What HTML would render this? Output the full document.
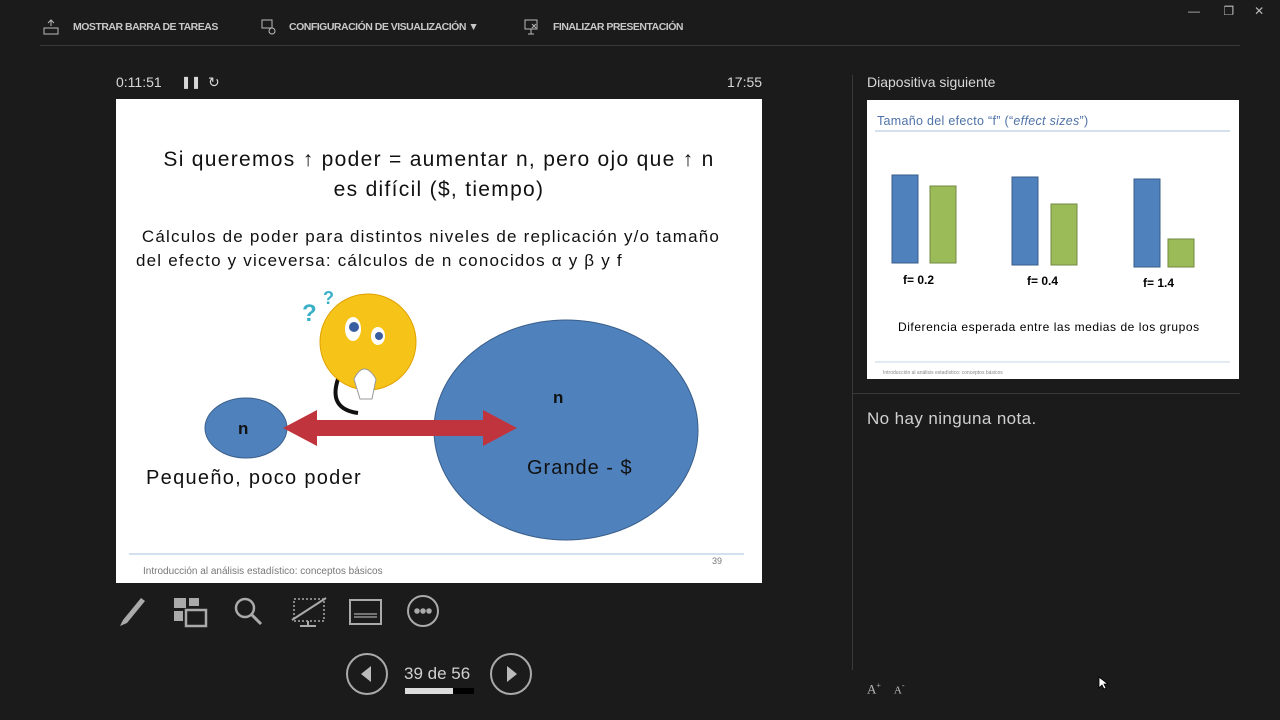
<!DOCTYPE html>
<html><head><meta charset="utf-8"><style>
body{margin:0;width:1280px;height:720px;background:#1b1b1b;font-family:"Liberation Sans",sans-serif;color:#d8d8d8;position:relative;overflow:hidden}
.a{position:absolute;white-space:nowrap}
.tb{font-size:10.5px;font-weight:bold;color:#c8c8c8;top:21px;letter-spacing:-0.5px}
.slide{position:absolute;left:116px;top:99px;width:646px;height:484px;background:#fff;color:#111}
.prev{position:absolute;left:867px;top:100px;width:372px;height:279px;background:#fff;color:#111}
</style></head><body>
<div class="a tb" style="left:73px">MOSTRAR BARRA DE TAREAS</div>
<div class="a tb" style="left:289px">CONFIGURACIÓN DE VISUALIZACIÓN ▼</div>
<div class="a tb" style="left:553px">FINALIZAR PRESENTACIÓN</div>
<svg class="a" style="left:42px;top:18px" width="18" height="18"><path d="M9 2v6M6 5l3-3 3 3M2 10h14v6H2z" stroke="#bbb" fill="none"/></svg>
<svg class="a" style="left:260px;top:18px" width="18" height="18"><rect x="2" y="2" width="10" height="8" stroke="#bbb" fill="none"/><circle cx="12" cy="13" r="3" stroke="#bbb" fill="none"/></svg>
<svg class="a" style="left:523px;top:18px" width="18" height="18"><rect x="2" y="2" width="12" height="9" stroke="#bbb" fill="none"/><path d="M8 11v5M5 16h6M9 6l4 4M13 6l-4 4" stroke="#bbb"/></svg>
<div class="a" style="left:1188px;top:4px;color:#bbb;font-size:12px">&#8212;&nbsp;&nbsp;&nbsp;&nbsp;&nbsp;&nbsp;&nbsp;❐&nbsp;&nbsp;&nbsp;&nbsp;&nbsp;&nbsp;✕</div>
<div class="a" style="left:40px;top:45px;width:1200px;height:1px;background:#3a3a3a"></div>
<div class="a" style="left:116px;top:74px;font-size:14px">0:11:51</div>
<div class="a" style="left:181px;top:75px;font-size:12px">❚❚</div>
<div class="a" style="left:208px;top:74px;font-size:14px">↻</div>
<div class="a" style="left:727px;top:74px;font-size:14px">17:55</div>
<div class="a" style="left:852px;top:75px;width:1px;height:595px;background:#3a3a3a"></div>
<div class="a" style="left:867px;top:74px;font-size:14px">Diapositiva siguiente</div>
<div class="slide">
<div class="a" style="left:0;width:646px;text-align:center;top:46px;font-size:21px;line-height:30px;letter-spacing:1.3px">Si queremos ↑ poder = aumentar n, pero ojo que ↑ n<br>es difícil ($, tiempo)</div>
<div class="a" style="left:20px;top:126px;font-size:17px;line-height:24px;letter-spacing:1.2px">&nbsp;Cálculos de poder para distintos niveles de replicación y/o tamaño<br>del efecto y viceversa: cálculos de n conocidos α y β y f</div>
<svg class="a" style="left:0;top:0" width="646" height="484">
<ellipse cx="450" cy="331" rx="132" ry="110" fill="#4f81bd" stroke="#3a5f8a"/>
<ellipse cx="130" cy="329" rx="41" ry="30" fill="#4f81bd" stroke="#3a5f8a"/>
<path d="M167 329l34-18v10h166v-10l34 18-34 18v-10h-166v10z" fill="#c0343d"/>
<path d="M222 280q-10 30 20 34" stroke="#111" stroke-width="4" fill="none"/>
<circle cx="252" cy="243" r="48" fill="#f6c419" stroke="#e0a000"/>
<ellipse cx="237" cy="230" rx="8" ry="12" fill="#fff"/><circle cx="238" cy="228" r="5" fill="#3a5fa0"/>
<ellipse cx="262" cy="237" rx="7" ry="9" fill="#fff"/><circle cx="263" cy="237" r="4" fill="#3a5fa0"/>
<path d="M238 280q10-20 22 0l-4 20h-12z" fill="#fff" stroke="#999"/>
<text x="186" y="222" fill="#3bb0c8" font-size="24" font-weight="bold">?</text><text x="207" y="205" fill="#3bb0c8" font-size="18" font-weight="bold">?</text>
<text x="122" y="335" font-size="17" font-weight="bold" fill="#111">n</text>
<text x="437" y="304" font-size="17" font-weight="bold" fill="#111">n</text>
<text x="411" y="375" font-size="20" fill="#111" letter-spacing="1" font-family="Liberation Sans">Grande - $</text>
<text x="30" y="385" font-size="20" fill="#111" letter-spacing="1.3" font-family="Liberation Sans">Pequeño, poco poder</text>
<line x1="13" y1="455" x2="628" y2="455" stroke="#a7c0de"/>
<text x="27" y="475" font-size="10" fill="#777">Introducción al análisis estadístico: conceptos básicos</text>
<text x="596" y="465" font-size="9" fill="#777">39</text>
</svg></div>
<div class="prev"><svg width="372" height="279">
<text x="10" y="25" font-size="12.5" fill="#4f73a8" letter-spacing="0.3">Tamaño del efecto “f” (“<tspan font-style="italic">effect sizes</tspan>”)</text>
<line x1="8" y1="31" x2="363" y2="31" stroke="#c5d5e8" stroke-width="1.5"/>
<rect x="25" y="75" width="26" height="88" fill="#4f81bd" stroke="#385d8a"/>
<rect x="63" y="86" width="26" height="77" fill="#9bbb59" stroke="#71893f"/>
<rect x="145" y="77" width="26" height="88" fill="#4f81bd" stroke="#385d8a"/>
<rect x="184" y="104" width="26" height="61" fill="#9bbb59" stroke="#71893f"/>
<rect x="267" y="79" width="26" height="88" fill="#4f81bd" stroke="#385d8a"/>
<rect x="301" y="139" width="26" height="28" fill="#9bbb59" stroke="#71893f"/>
<text x="36" y="184" font-size="12" font-weight="bold">f= 0.2</text>
<text x="160" y="185" font-size="12" font-weight="bold">f= 0.4</text>
<text x="276" y="187" font-size="12" font-weight="bold">f= 1.4</text>
<text x="31" y="231" font-size="12" letter-spacing="0.55">Diferencia esperada  entre las medias de los grupos</text>
<line x1="8" y1="262" x2="363" y2="262" stroke="#c5d5e8"/>
<text x="16" y="274" font-size="5" fill="#888">Introducción al análisis estadístico: conceptos básicos</text>
</svg></div>
<div class="a" style="left:852px;top:393px;width:388px;height:1px;background:#3a3a3a"></div>
<div class="a" style="left:867px;top:409px;font-size:17px;color:#d0d0d0;letter-spacing:0.4px">No hay ninguna nota.</div>
<div class="a" style="left:867px;top:681px;font-size:13px;color:#bbb;font-family:'Liberation Serif',serif">A<sup style="font-size:8px">+</sup>&nbsp;&nbsp;&nbsp;&nbsp;<span style="font-size:11px">A</span><sup style="font-size:8px">-</sup></div>
<svg class="a" style="left:116px;top:594px" width="330" height="36" fill="none" stroke="#aaa" stroke-width="2.5">
<path d="M4 32l3-6 18-22 4 3-18 22z" fill="#aaa" stroke="none"/>
<rect x="58" y="4" width="12" height="10" fill="#aaa" stroke="none"/><rect x="73" y="4" width="10" height="8" fill="#aaa" stroke="none"/><rect x="58" y="17" width="9" height="10" fill="#aaa" stroke="none"/><rect x="70" y="16" width="20" height="16"/>
<circle cx="129" cy="14" r="9"/><path d="M136 21l9 9" stroke-width="3"/>
<path d="M178 5h30v22h-30z" stroke-width="1.5" stroke-dasharray="2 2"/><path d="M176 26l34-22M192 27v5M184 32h16" stroke-width="2"/>
<rect x="234" y="6" width="31" height="24" stroke-width="2"/><path d="M238 23h23M238 20h23" stroke-width="1.2"/>
<circle cx="307" cy="17" r="15" stroke-width="2"/><circle cx="301" cy="17" r="1.5" fill="#aaa"/><circle cx="307" cy="17" r="1.5" fill="#aaa"/><circle cx="313" cy="17" r="1.5" fill="#aaa"/>
</svg>
<svg class="a" style="left:345px;top:653px" width="190" height="44" fill="none" stroke="#aaa" stroke-width="2">
<circle cx="22" cy="21" r="20"/><path d="M26 13v16l-10-8z" fill="#bbb" stroke="none"/>
<circle cx="166" cy="21" r="20"/><path d="M162 13v16l10-8z" fill="#bbb" stroke="none"/>
</svg>
<div class="a" style="left:404px;top:664px;font-size:17px;color:#d0d0d0">39 de 56</div>
<div class="a" style="left:405px;top:688px;width:69px;height:6px;background:#000"></div>
<div class="a" style="left:405px;top:688px;width:48px;height:6px;background:#ddd"></div>
<svg class="a" style="left:1098px;top:676px" width="10" height="14"><path d="M1 1v11l3-3 2 4 2-1-2-4h4z" fill="#fff" stroke="#000" stroke-width=".8"/></svg>
</body></html>
